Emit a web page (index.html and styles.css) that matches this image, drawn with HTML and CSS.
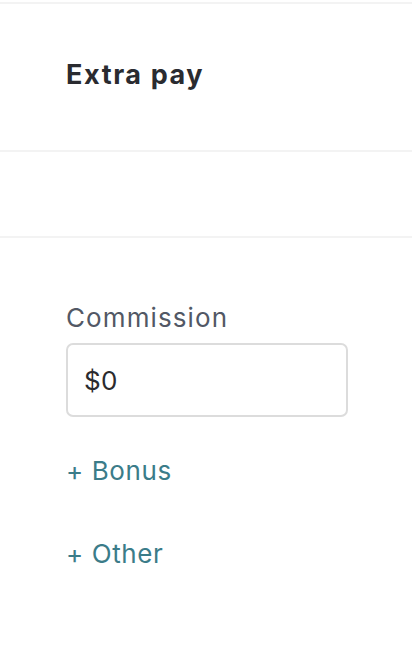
FILE: index.html
```html
<!DOCTYPE html>
<html>
<head>
<meta charset="utf-8">
<link rel="stylesheet" href="styles.css">
</head>
<body>
<div class="page">
  <div class="rule rule-top"></div>
  <section class="header">
    <h2 class="title">Extra pay</h2>
  </section>
  <div class="rule"></div>
  <section class="blank"></section>
  <div class="rule"></div>
  <section class="form">
    <label class="label" for="commission">Commission</label>
    <div class="input-box"><span class="input-value">$0</span></div>
    <a class="add-link link-bonus">+ Bonus</a>
    <a class="add-link link-other">+ Other</a>
  </section>
</div>
</body>
</html>
```
FILE: styles.css
```css
html, body {
  margin: 0;
  padding: 0;
  background: #ffffff;
}
body {
  font-family: Inter, "Liberation Sans", sans-serif;
  width: 412px;
  height: 652px;
  overflow: hidden;
}
.page {
  display: flex;
  flex-direction: column;
  padding-top: 2px;
}
.rule {
  height: 2px;
  background: #f3f3f3;
}
.header {
  height: 146px;
  box-sizing: border-box;
  padding: 0 0 4px 66px;
  display: flex;
  align-items: center;
}
.title {
  margin: 0;
  font-size: 27px;
  font-weight: 700;
  color: #2a2b30;
  letter-spacing: 1.6px;
  line-height: 32px;
}
.blank {
  height: 84px;
}
.form {
  display: flex;
  flex-direction: column;
  align-items: flex-start;
  padding: 65px 0 0 66px;
}
.label {
  font-size: 26px;
  color: #525865;
  line-height: 30px;
  letter-spacing: 1.1px;
}
.input-box {
  margin-top: 10px;
  box-sizing: border-box;
  width: 282px;
  height: 74px;
  border: 2px solid #dcdcdc;
  border-radius: 7px;
  display: flex;
  align-items: center;
  padding-left: 16px;
}
.input-value {
  font-size: 26px;
  color: #2b2b2e;
  letter-spacing: 0.4px;
}
.add-link {
  font-size: 26px;
  color: #3b7c89;
  line-height: 30px;
  letter-spacing: 0.6px;
  cursor: pointer;
}
.link-bonus {
  margin-top: 39px;
}
.link-other {
  margin-top: 53px;
}
```
